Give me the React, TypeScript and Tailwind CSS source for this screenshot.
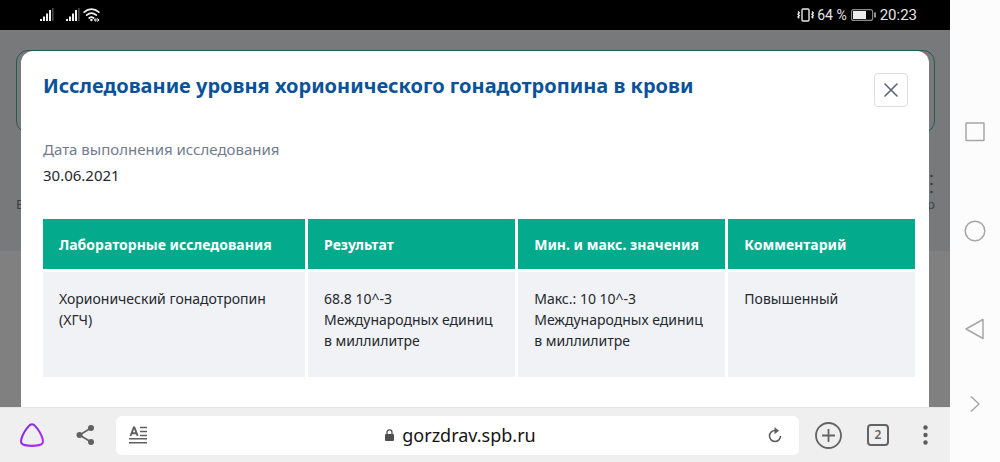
import React from "react";

const results = [
  {
    test: "Хорионический гонадотропин (ХГЧ)",
    result: "68.8 10^-3 Международных единиц в миллилитре",
    range: "Макс.: 10 10^-3 Международных единиц в миллилитре",
    comment: "Повышенный",
  },
];

const headCell =
  "h-[53px] border-r-[3px] border-b-[3px] border-white bg-[#03aa8c] px-4 text-left align-middle font-bold text-white last:border-r-0";
const bodyCell =
  "border-r-[3px] border-white bg-[#f0f2f6] px-4 pt-4 pb-[26px] align-top last:border-r-0";

function Signal() {
  return (
    <svg width="15" height="14" viewBox="0 0 15 14" aria-hidden="true">
      <g fill="#f0f0f0">
        <rect x="0" y="11" width="2" height="2" />
        <rect x="3" y="8.5" width="2" height="4.5" />
        <rect x="6" y="5.5" width="2" height="7.5" />
        <rect x="9" y="2" width="2" height="11" />
      </g>
      <rect x="12" y="0" width="1.6" height="13" fill="#4a4a4a" />
    </svg>
  );
}

function StatusBar() {
  return (
    <header className="flex h-[30px] shrink-0 items-center justify-between bg-black pr-[33px] pl-10 text-[#e4e4e4]">
      <div className="flex items-center">
        <Signal />
        <span className="w-[11px]" />
        <Signal />
        <svg className="ml-[2px]" width="18" height="14" viewBox="0 0 18 14" fill="none" stroke="#f0f0f0" strokeWidth="1.7" strokeLinecap="round" aria-hidden="true">
          <path d="M1.2 4.2C5.5.2 11.5.2 15.8 4.2M3.7 7.2c3-2.7 6.6-2.7 9.6 0M6.2 10c1.5-1.2 3-1.2 4.4 0" />
          <circle cx="8.4" cy="12" r="1.2" fill="#f0f0f0" stroke="none" />
          <path d="M11.5 12h4.3M12.8 10.6 11.4 12l1.4 1.3M14.6 10.6 16 12l-1.4 1.3" strokeWidth="1" />
        </svg>
      </div>
      <div className="flex items-center font-[Roboto,sans-serif] text-[14px] leading-5">
        <svg width="17" height="14" viewBox="0 0 17 14" fill="none" stroke="#e8e8e8" aria-hidden="true">
          <rect x="5" y="1" width="7" height="12" rx="1" strokeWidth="1.4" />
          <path d="m1 3.5 1.3 1.3L1 6.2l1.3 1.3L1 8.9l1.3 1.3M15 3.5l1.3 1.3L15 6.2l1.3 1.3L15 8.9l1.3 1.3" strokeWidth="1.4" />
        </svg>
        <span className="ml-[3px]">64 %</span>
        <svg className="ml-1" width="25" height="12" viewBox="0 0 25 12" fill="none" aria-hidden="true">
          <rect x=".6" y=".6" width="21" height="10.8" rx="2" stroke="#8c8c8c" strokeWidth="1.1" />
          <rect x="2" y="2" width="13" height="8" fill="#ececec" />
          <path d="M24 3.5v5" stroke="#d0d0d0" strokeWidth="1.4" />
        </svg>
        <time className="ml-1 text-[15px]">20:23</time>
      </div>
    </header>
  );
}

function Backdrop() {
  return (
    <div className="absolute inset-0 overflow-hidden bg-[#808080]" aria-hidden="true">
      <div className="h-[221px] bg-[#78797b] pt-5 pr-[15px] pl-4">
        <div className="h-[83px] rounded-xl border border-[#245a50]" />
        <div className="flex items-end justify-between pt-[41px] font-['Noto_Sans',sans-serif] text-[13px] leading-5 text-[#3c3f45]">
          <span>Е</span>
          <div className="flex flex-col items-end">
            <svg width="5" height="20" viewBox="0 0 5 20" fill="#3c3f45">
              <circle cx="1.5" cy="2" r="1.3" />
              <circle cx="1.5" cy="10" r="1.3" />
              <circle cx="1.5" cy="18" r="1.3" />
            </svg>
            <span>р</span>
          </div>
        </div>
      </div>
    </div>
  );
}

function ResultDialog() {
  return (
    <section
      role="dialog"
      aria-labelledby="dialog-title"
      className="relative mx-[21px] mt-[21px] flex-1 rounded-t-xl bg-white pr-[14px] pb-7 pl-[22px] font-['Noto_Sans',sans-serif] text-[#25282d]"
    >
      <div className="flex items-start justify-between pt-[22px] pr-[7px]">
        <h1 id="dialog-title" className="text-[20px] leading-[26px] font-bold text-[#0a5299]">
          Исследование уровня хорионического гонадотропина в крови
        </h1>
        <button
          type="button"
          aria-label="Закрыть"
          className="flex size-[34px] shrink-0 items-center justify-center rounded border border-[#dcdee2] bg-white"
        >
          <svg width="14" height="14" viewBox="0 0 14 14" fill="none" stroke="#5b6478" strokeWidth="1.6" strokeLinecap="round" aria-hidden="true">
            <path d="m1 1 12 12M13 1 1 13" />
          </svg>
        </button>
      </div>
      <dl className="pt-[31px] text-[15px]">
        <dt className="leading-[22px] text-[#727c8e]">Дата выполнения исследования</dt>
        <dd className="pt-1 leading-[22px]">30.06.2021</dd>
      </dl>
      <table className="mt-[33px] w-full table-fixed border-separate border-spacing-0 text-[14px] leading-[21px]">
        <colgroup>
          <col className="w-[30.4%]" />
          <col className="w-[24.1%]" />
          <col className="w-[24.1%]" />
          <col />
        </colgroup>
        <thead>
          <tr>
            <th scope="col" className={headCell}>Лабораторные исследования</th>
            <th scope="col" className={headCell}>Результат</th>
            <th scope="col" className={headCell}>Мин. и макс. значения</th>
            <th scope="col" className={headCell}>Комментарий</th>
          </tr>
        </thead>
        <tbody>
          {results.map((row) => (
            <tr key={row.test}>
              <td className={bodyCell}>{row.test}</td>
              <td className={bodyCell}>{row.result}</td>
              <td className={bodyCell}>{row.range}</td>
              <td className={bodyCell}>{row.comment}</td>
            </tr>
          ))}
        </tbody>
      </table>
    </section>
  );
}

function BrowserBar() {
  return (
    <footer className="flex h-[55px] shrink-0 items-center border-t border-[#e6e6e6] bg-[#efefef] px-[19px]">
      <button type="button" aria-label="Алиса">
        <svg width="26" height="26" viewBox="0 0 26 26" fill="none" aria-hidden="true">
          <defs>
            <linearGradient id="alice" x1="0" y1="0" x2="1" y2="1">
              <stop offset="0" stopColor="#7a2de0" />
              <stop offset="1" stopColor="#b030f2" />
            </linearGradient>
          </defs>
          <path d="M13 2.2c-1.3 0-2.3.7-3.3 1.9C6.9 7.3 3.6 12.3 2.3 17.2c-1 4 .7 5.3 3.5 5.9 4.3.9 10.1.9 14.4 0 2.8-.6 4.5-1.9 3.5-5.9-1.3-4.9-4.6-9.9-7.4-13.1C15.3 2.9 14.3 2.2 13 2.2Z" stroke="url(#alice)" strokeWidth="2.1" />
        </svg>
      </button>
      <button type="button" aria-label="Поделиться" className="ml-[31px]">
        <svg width="19" height="20" viewBox="0 0 19 20" fill="#616161" aria-hidden="true">
          <path d="M15 3 3.5 10 15 17" fill="none" stroke="#616161" strokeWidth="1.6" />
          <circle cx="15" cy="3" r="3" />
          <circle cx="3.5" cy="10" r="3" />
          <circle cx="15" cy="17" r="3" />
        </svg>
      </button>
      <div className="mr-4 ml-[21px] flex h-[39px] flex-1 items-center rounded-md bg-white pr-[17px] pl-[13px]">
        <button type="button" aria-label="Режим чтения">
          <svg width="18" height="18" viewBox="0 0 18 18" fill="none" stroke="#5f5f5f" aria-hidden="true">
            <path d="m1.5 10 3.3-8.5h.6L8.7 10M2.7 7.2h4.8" strokeWidth="1.9" />
            <path d="M11 1.5h7M11 5.5h7M11 9.5h7M0 12.8h18M0 16.800h18" strokeWidth="1.6" />
          </svg>
        </button>
        <a href="https://gorzdrav.spb.ru" className="flex flex-1 items-center justify-center gap-2 pl-1.5 font-['Noto_Sans',sans-serif] text-[18px] leading-6 text-[#151515]">
          <svg width="9" height="13" viewBox="0 0 9 13" aria-hidden="true">
            <path d="M2 6V3.3a2.5 2.5 0 0 1 5 0V6" fill="none" stroke="#505050" strokeWidth="1.3" />
            <rect x="0" y="5" width="9" height="7" rx="1" fill="#505050" />
          </svg>
          gorzdrav.spb.ru
        </a>
        <button type="button" aria-label="Обновить">
          <svg width="14" height="16" viewBox="0 0 14 16" fill="none" aria-hidden="true">
            <path d="M7 3.5A5.5 5.5 0 1 0 12.5 9" stroke="#5f5f5f" strokeWidth="1.6" />
            <path d="m6.5 0 4.5 3.7-4.5 3.5Z" fill="#5f5f5f" />
          </svg>
        </button>
      </div>
      <button type="button" aria-label="Новая вкладка">
        <svg width="27" height="27" viewBox="0 0 27 27" fill="none" stroke="#646464" strokeWidth="1.8" aria-hidden="true">
          <circle cx="13.5" cy="13.5" r="12.5" />
          <path d="M13.5 7v13M7 13.5h13" />
        </svg>
      </button>
      <button type="button" aria-label="Вкладки" className="ml-[25px] flex size-[22px] items-center justify-center rounded border-2 border-[#646464] font-['Noto_Sans',sans-serif] text-[12px] leading-4 font-semibold text-[#646464]">
        2
      </button>
      <button type="button" aria-label="Меню" className="ml-[31px] flex w-[11px] justify-center">
        <svg width="5" height="20" viewBox="0 0 5 20" fill="#5c5c5c" aria-hidden="true">
          <circle cx="2.5" cy="2.5" r="2.2" />
          <circle cx="2.5" cy="10" r="2.2" />
          <circle cx="2.5" cy="17.5" r="2.2" />
        </svg>
      </button>
    </footer>
  );
}

function SystemNav() {
  return (
    <nav aria-label="Системная навигация" className="flex w-[50px] shrink-0 flex-col items-center bg-[#fcfcfc] pt-[121px]">
      <button type="button" aria-label="Недавние">
        <svg className="block" width="22" height="22" viewBox="0 0 22 22" fill="none" stroke="#a6a6a6" strokeWidth="1.5" aria-hidden="true">
          <rect x="2" y="2" width="18" height="17.5" rx=".5" />
        </svg>
      </button>
      <button type="button" aria-label="Домой" className="mt-[77px]">
        <svg className="block" width="22" height="22" viewBox="0 0 22 22" fill="none" stroke="#a6a6a6" strokeWidth="1.5" aria-hidden="true">
          <circle cx="11" cy="11" r="9.8" />
        </svg>
      </button>
      <button type="button" aria-label="Назад" className="mt-[76px]">
        <svg className="block" width="22" height="22" viewBox="0 0 22 22" fill="none" stroke="#a6a6a6" strokeWidth="1.5" strokeLinejoin="round" aria-hidden="true">
          <path d="M19 1.5v19L2 11Z" />
        </svg>
      </button>
      <button type="button" aria-label="Скрыть панель" className="mt-[55px]">
        <svg className="block" width="10" height="18" viewBox="0 0 10 18" fill="none" stroke="#a6a6a6" strokeWidth="1.5" aria-hidden="true">
          <path d="m1 1.5 8 7.5-8 7.5" />
        </svg>
      </button>
    </nav>
  );
}

export default function App() {
  return (
    <div className="flex min-h-screen bg-[#fcfcfc]">
      <div className="flex min-w-0 flex-1 flex-col">
        <StatusBar />
        <main className="relative flex flex-1 flex-col">
          <Backdrop />
          <ResultDialog />
        </main>
        <BrowserBar />
      </div>
      <SystemNav />
    </div>
  );
}
